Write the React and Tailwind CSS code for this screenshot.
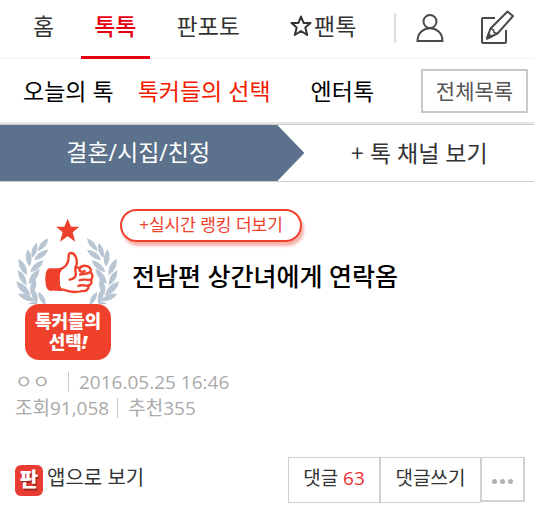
import { useState } from "react";

const channels = [
  { name: "오늘의 톡", active: false },
  { name: "톡커들의 선택", active: true },
  { name: "엔터톡", active: false },
];

// each leaf goes from its tip to the stem: [tipX, tipY, baseX, baseY]
const leaves = [
  [145, 115, 113, 154],
  [110, 128, 96, 174],
  [145, 149, 102, 180],
  [83, 148, 89, 200],
  [131, 181, 90, 217],
  [56, 176, 81, 226],
  [119, 206, 86, 252],
  [54, 210, 80, 256],
  [106, 234, 93, 284],
  [48, 244, 92, 288],
  [98, 264, 110, 313],
  [54, 281, 104, 303],
  [115, 275, 137, 316],
  [76, 320, 112, 306],
];

function leafPath([x1, y1, x2, y2]) {
  const mx = (x1 + x2) / 2;
  const my = (y1 + y2) / 2;
  const dx = (y2 - y1) * 0.32;
  const dy = (x1 - x2) * 0.32;
  return `M${x1} ${y1}Q${mx + dx} ${my + dy} ${x2} ${y2}Q${mx - dx} ${my - dy} ${x1} ${y1}Z`;
}

function UserIcon() {
  return (
    <svg className="w-7 h-7" viewBox="0 0 28 28" fill="none" stroke="#4a4a4a" strokeWidth="2">
      <circle cx="14" cy="7.500" r="6.500" />
      <path d="M1.500 27C1.500 10 26.500 10 26.500 27Z" />
    </svg>
  );
}

function WriteIcon() {
  return (
    <svg className="w-[34px] h-[34px]" viewBox="0 0 34 34" fill="none" stroke="#4a4a4a" strokeWidth="2" strokeLinejoin="round">
      <path d="M15 8H3Q2 8 2 9V32Q2 33 3 33H25Q26 33 26 32V20" />
      <path d="M27.500 1.500L33 6L17.500 23.500L7 28.500L10.500 18.500Z" />
      <path d="M10.500 18.500L13.500 20L14 22.500L17.500 23.500" strokeWidth="1.500" />
      <path d="M8.500 24L11.500 26.500L7 28.500Z" fill="#4a4a4a" />
    </svg>
  );
}

function StarIcon() {
  return (
    <svg className="w-[22px] h-[22px]" viewBox="0 0 22 22" fill="none" stroke="#333" strokeWidth="2" strokeLinejoin="round">
      <path d="M11 1.500L13.600 8H20.500L15.300 12.500L17.200 20L11 16L4.800 20L6.700 12.500L1.500 8H8.400Z" />
    </svg>
  );
}

function ChoiceBadge() {
  return (
    <div className="w-[105px] shrink-0">
      <svg className="w-full h-[87px]" viewBox="45 51 315 261" aria-hidden="true">
        <path
          d="M203 56L213 80L238 80L218 97L226 125L203 109L180 125L188 97L168 80L193 80Z"
          fill="#ee402b"
        />
        <g fill="#b8c5d2">
          {leaves.map((leaf, i) => (
            <path key={i} d={leafPath(leaf)} />
          ))}
        </g>
        <g fill="#b8c5d2" transform="translate(406 0) scale(-1 1)">
          {leaves.map((leaf, i) => (
            <path key={i} d={leafPath(leaf)} />
          ))}
        </g>
        <g fill="#fff" stroke="#ee402b" strokeWidth="7" strokeLinecap="round" strokeLinejoin="round">
          <path d="M176 209C197 204 206 192 206 172C203 156 219 154 227 170C232 181 231 193 227 203L240 203C248 194 268 195 273 210L271 216C279 224 279 233 273 239C277 247 273 254 266 257C267 268 257 275 246 273C228 278 205 275 190 269H176Z" />
          <path d="M227 200C222 212 233 224 224 232C220 236 215 238 209 239" fill="none" />
          <path d="M239 204C236 214 246 219 254 213" fill="none" />
          <path d="M271 216C261 223 249 221 240 224" fill="none" />
          <path d="M273 239C261 242 250 235 239 241" fill="none" />
          <path d="M266 257C254 259 246 252 235 258" fill="none" />
        </g>
        <path d="M182 205H148Q136 208 136 238Q136 268 148 272H188Q165 238 188 205Z" fill="#ee402b" />
      </svg>
      <p className="w-[86px] h-14 ml-[10px] pt-[7px] rounded-[14px] bg-[#ee402b] text-center text-[18px] leading-[21px] font-black text-white">
        톡커들의
        <br />
        선택<i>!</i>
      </p>
    </div>
  );
}

export default function App() {
  const [tab, setTab] = useState("톡톡");

  const tabClass = (name) =>
    name === tab
      ? "h-[59px] px-[13px] border-b-3 border-[#e60012] text-[#e60012] font-medium"
      : "h-[59px] px-[13px] text-[#333]";

  return (
    <div className="min-h-screen bg-white font-['Open_Sans','Noto_Sans_CJK_KR',sans-serif] text-[23px] leading-[52px] whitespace-nowrap">
      {/* Top menu */}
      <header className="flex items-start justify-between h-[59px] border-b border-[#f3f3f3] pl-5 pr-5">
        <nav className="flex">
          <a href="#home" onClick={() => setTab("홈")} className={tabClass("홈")}>홈</a>
          <a href="#talk" onClick={() => setTab("톡톡")} className={`ml-[14px] ${tabClass("톡톡")}`}>톡톡</a>
          <a href="#photo" onClick={() => setTab("판포토")} className={`ml-[14px] ${tabClass("판포토")}`}>판포토</a>
          <a href="#fan" onClick={() => setTab("팬톡")} className={`ml-6 ${tabClass("팬톡")}`}>
            <span className="flex items-center gap-[2px]"><StarIcon /> 팬톡</span>
          </a>
        </nav>
        <div className="flex items-center h-14">
          <span className="w-[2px] h-[30px] bg-[#ddd] mr-5" />
          <button aria-label="내 정보" className="mr-9"><UserIcon /></button>
          <button aria-label="글쓰기" className="-mt-[2px]"><WriteIcon /></button>
        </div>
      </header>

      {/* Sub menu */}
      <div className="flex items-center justify-between h-[65px] border-b-2 border-[#e6e6e6] pl-[23px] pr-[6px]">
        <nav className="flex">
          {channels.map((c) => (
            <a
              key={c.name}
              href="#channel"
              className={c.active ? "ml-6 mr-10 text-[#f21b00]" : "text-black"}
            >
              {c.name}
            </a>
          ))}
        </nav>
        <button className="w-[107px] h-11 border-2 border-[#c8c8c8] text-[21px] leading-10 text-[#555]">
          전체목록
        </button>
      </div>

      {/* Channel bar */}
      <div className="flex h-[58px] border-y border-[#ccc] leading-[54px]">
        <a
          href="#category"
          className="w-[57%] pr-7 text-center text-white bg-[#5c728c] [clip-path:polygon(0_0,calc(100%-27px)_0,100%_50%,calc(100%-27px)_100%,0_100%)]"
        >
          결혼/시집/친정
        </a>
        <button className="flex-1 text-[#333]">+ 톡 채널 보기</button>
      </div>

      <main className="px-[15px]">
        <div className="flex pt-[35px]">
          <ChoiceBadge />
          <div className="-mt-2">
            <a
              href="#ranking"
              className="block w-[182px] h-[33px] border-2 border-[#ee402b] rounded-full text-center text-[17px] leading-7 text-[#ee402b] shadow-[2px_4px_3px_#f7b3aa]"
            >
              +실시간 랭킹 더보기
            </a>
            <h1 className="mt-[14px] ml-3 text-[25px] leading-10 font-medium text-black">
              전남편 상간녀에게 연락옴
            </h1>
          </div>
        </div>

        {/* Post info */}
        <div className="mt-[9px] text-[19px] leading-[26px] text-[#aaa]">
          <div className="flex items-center">
            <span>ㅇㅇ</span>
            <span className="w-px h-5 bg-[#ccc] ml-[18px] mr-[10px]" />
            <time>2016.05.25 16:46</time>
          </div>
          <div className="flex items-center">
            <span>조회91,058</span>
            <span className="w-px h-5 bg-[#ccc] ml-2 mr-[10px]" />
            <span>추천355</span>
          </div>
        </div>

        {/* Actions */}
        <div className="flex justify-between mt-9 -mr-[6px] leading-[42px] text-[#333]">
          <a href="#app" className="flex items-center h-[46px] gap-1 text-[20px]">
            <span className="flex items-center justify-center w-7 h-[31px] rounded-md bg-[#e83b32] text-white text-[20px] leading-7 font-black [text-shadow:1px_2px_0_#9c2720]">
              판
            </span>
            <span className="-mt-1">앱으로 보기</span>
          </a>
          <div className="flex items-start text-[19px]">
            <button className="w-[92px] h-[46px] border border-[#d0d0d0] leading-10 pb-1">
              댓글 <span className="text-[#ee3030]">63</span>
            </button>
            <button className="w-[101px] h-[46px] border border-[#d0d0d0] leading-10 pb-1">댓글쓰기</button>
            <button aria-label="더보기" className="flex items-center justify-center gap-[3px] w-11 h-[45px] border border-r-2 border-b-2 border-[#d0d0d0] pt-1">
              <span className="w-[5px] h-[5px] rounded-full bg-[#b0b0b0]" />
              <span className="w-[5px] h-[5px] rounded-full bg-[#b0b0b0]" />
              <span className="w-[5px] h-[5px] rounded-full bg-[#b0b0b0]" />
            </button>
          </div>
        </div>
      </main>
    </div>
  );
}
